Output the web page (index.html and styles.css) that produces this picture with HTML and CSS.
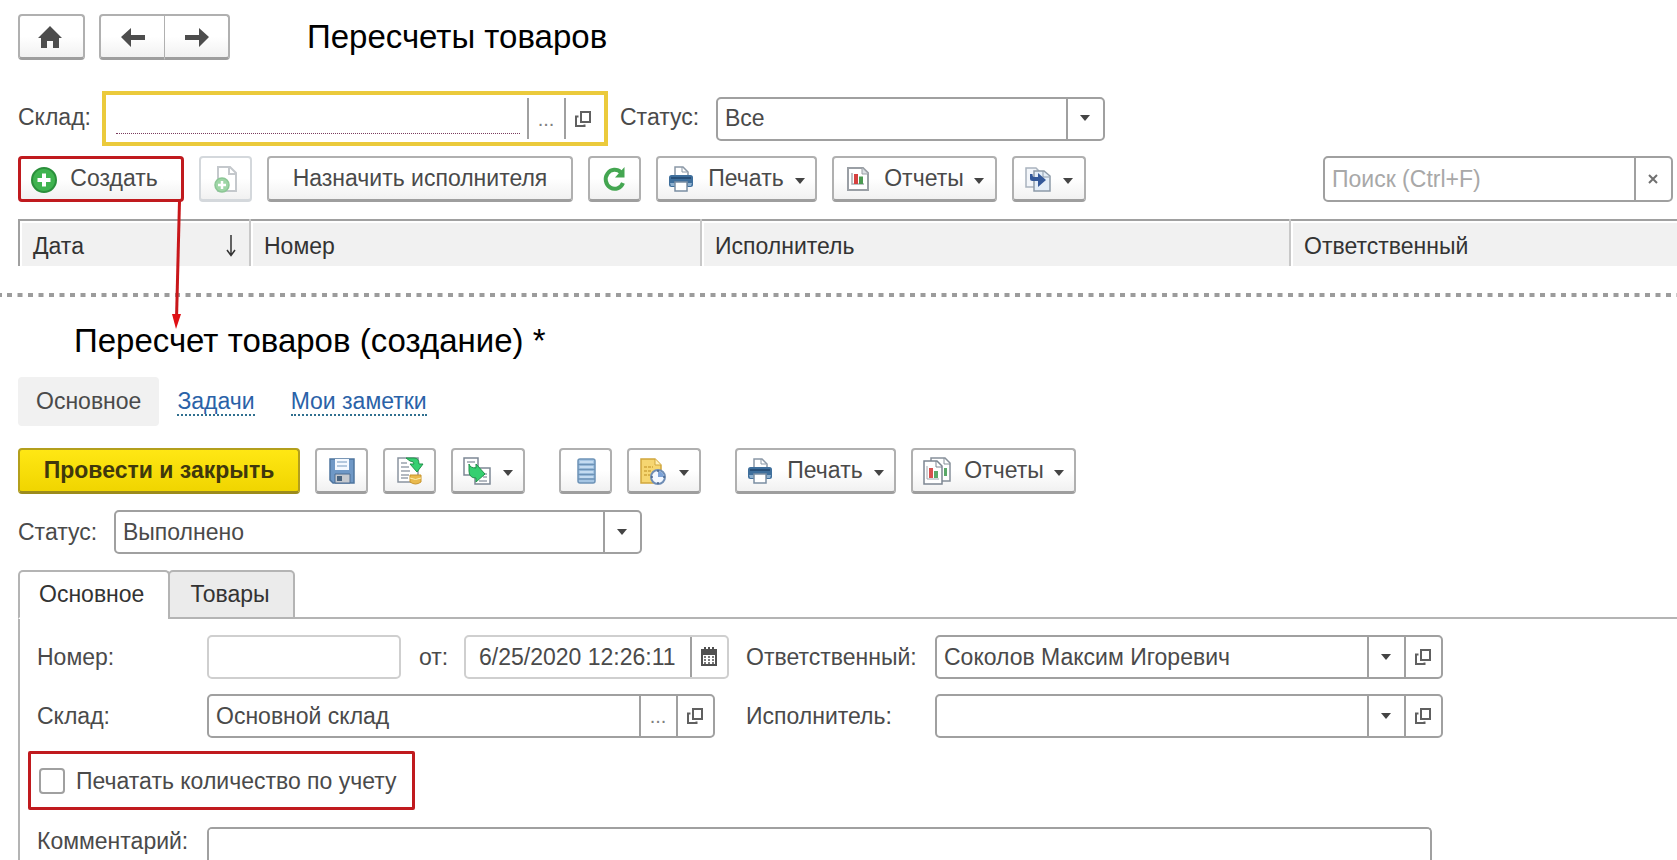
FILE: index.html
```html
<!DOCTYPE html>
<html lang="ru">
<head>
<meta charset="utf-8">
<meta name="viewport" content="width=device-width, initial-scale=1">
<title>Пересчеты товаров</title>
<link rel="stylesheet" href="styles.css">
</head>
<body>
<svg class="sprite" aria-hidden="true">
  <symbol id="i-open" viewBox="0 0 18 18"><path d="M7 2h9v10H7zM4.500 6.500H2V16h8.500v-1.500" fill="none" stroke="currentColor" stroke-width="2"/></symbol>
  <symbol id="i-caret" viewBox="0 0 10 6"><path d="M0 0h10L5 6z" fill="currentColor"/></symbol>
  <symbol id="i-printer" viewBox="0 0 26 26">
    <path d="M7 10V1h8l5 5v4" fill="#fff" stroke="#8b98a6" stroke-width="1.500"/><path d="M14 1v5h5" fill="none" stroke="#8b98a6"/>
    <rect x="1" y="9" width="24" height="12" rx="2.500" fill="#3f6f9c"/><path d="M3 12h20" stroke="#274f78" stroke-width="2"/><path d="M2 17h5v3H3zM20 17h4l-1 3h-3z" fill="#8fb1cf"/>
    <path d="M7 16h12v9H7z" fill="#fff" stroke="#7b8ea3" stroke-width="1.500"/>
  </symbol>
</svg>

<main class="page">
  <header class="head">
    <button class="btn btn-home" type="button" aria-label="Домой"><svg class="ico" viewBox="0 0 26 26"><path d="M13 2 1 14h3v10h6v-7h6v7h6V14h3z" fill="#4d4d4d"/></svg></button>
    <div class="nav">
      <button class="btn" type="button" aria-label="Назад"><svg class="ico" viewBox="0 0 26 26"><path d="M1 13 11 4v7h14v5H11v7z" fill="#4d4d4d"/></svg></button>
      <button class="btn" type="button" aria-label="Вперед"><svg class="ico" viewBox="0 0 26 26"><path d="M25 13 15 4v7H1v5h14v7z" fill="#4d4d4d"/></svg></button>
    </div>
    <h1 class="title">Пересчеты товаров</h1>
  </header>

  <div class="filters">
    <label class="label" for="f-store">Склад:</label>
    <div class="focus">
      <input class="focus-input" id="f-store" type="text">
      <button class="focus-btn" type="button" aria-label="Выбрать"><span class="dots">...</span></button>
      <button class="focus-btn" type="button" aria-label="Открыть"><svg class="open"><use href="#i-open"/></svg></button>
    </div>
    <label class="label" for="f-status">Статус:</label>
    <div class="field field-status">
      <select class="ctl" id="f-status"><option>Все</option></select>
      <button class="side" type="button" aria-label="Список"><svg class="caret"><use href="#i-caret"/></svg></button>
    </div>
  </div>

  <div class="bar">
    <div class="create-wrap">
      <button class="btn btn-create" type="button"><svg class="ico" viewBox="0 0 26 26"><circle cx="13" cy="13" r="12" fill="#3fb34f" stroke="#2a8f3b" stroke-width="2"/><path d="M13 6.500v13M6.500 13h13" stroke="#fff" stroke-width="4"/></svg>Создать</button>
      <svg class="pointer" viewBox="0 0 12 128"><path d="M7.500 0 4.500 118" stroke="#c8161a" stroke-width="3"/><path d="M0 113h9L4 128z" fill="#e01015"/></svg>
    </div>
    <button class="btn btn-icon btn-off" type="button" disabled aria-label="Скопировать"><svg class="ico ico-lg" viewBox="0 0 26 28"><path d="M5 2h12l6 6v18H5z" fill="#fff" stroke="#c4c8cc" stroke-width="2"/><path d="M16 2v7h7" fill="none" stroke="#c4c8cc" stroke-width="2"/><circle cx="9" cy="20" r="7" fill="#9ed6a6" stroke="#8cc695" stroke-width="1.500"/><path d="M9 16v8M5 20h8" stroke="#fff" stroke-width="2.500"/></svg></button>
    <button class="btn btn-assign" type="button">Назначить исполнителя</button>
    <button class="btn btn-icon" type="button" aria-label="Обновить"><svg class="ico" viewBox="0 0 26 26"><path d="M19 6.500A9 9.500 0 1 0 21 17" fill="none" stroke="#44a651" stroke-width="4"/><path d="M22.500 1v10.500H13z" fill="#44a651"/></svg></button>
    <button class="btn btn-print" type="button"><svg class="ico"><use href="#i-printer"/></svg><span>Печать</span><svg class="caret"><use href="#i-caret"/></svg></button>
    <button class="btn btn-report" type="button"><svg class="ico" viewBox="0 0 26 26"><path d="M3 2h15l5 5v17H3z" fill="#fff" stroke="#9a9fa5" stroke-width="2"/><path d="M17 2v6h6" fill="#dde1e5" stroke="#9a9fa5"/><path d="M7 7v11h12" fill="none" stroke="#a8adb3" stroke-width="1.500"/><path d="M9 8h4v10H9z" fill="#d5403f"/><path d="M14 10.500h4V18h-4z" fill="#4b9a52"/></svg><span>Отчеты</span><svg class="caret"><use href="#i-caret"/></svg></button>
    <button class="btn btn-menu" type="button" aria-label="Создать на основании"><svg class="ico" viewBox="0 0 26 26"><path d="M1 2h10l3 3v16H1z" fill="#f3f6fa" stroke="#a9b3be" stroke-width="1.500"/><path d="M9 5h10l6 5v15H9z" fill="#e4eef8" stroke="#8d9aa8" stroke-width="1.500"/><path d="M18 5v6h6" fill="none" stroke="#8d9aa8"/><path d="M5 8v4.500q0 2.500 2.500 2.500H13V21l8-7-8-7v4H9q-1.500 0-1.500-3z" fill="#34599a"/></svg><svg class="caret"><use href="#i-caret"/></svg></button>
    <div class="field field-search">
      <input class="ctl" type="search" placeholder="Поиск (Ctrl+F)" aria-label="Поиск">
      <button class="side" type="button" aria-label="Очистить"><svg class="cross" viewBox="0 0 10 10"><path d="m1 1 8 8M9 1 1 9" stroke="currentColor" stroke-width="2"/></svg></button>
    </div>
  </div>

  <table class="list">
    <colgroup><col class="c-date"><col class="c-num"><col class="c-exec"><col></colgroup>
    <thead><tr>
      <th scope="col"><div class="sort"><span>Дата</span><svg class="down" viewBox="0 0 10 22"><path d="M5 0v20M1 15l4 5.500L9 15" fill="none" stroke="currentColor" stroke-width="1.500"/></svg></div></th>
      <th scope="col">Номер</th><th scope="col">Исполнитель</th><th scope="col">Ответственный</th>
    </tr></thead>
  </table>

  <svg class="divider" viewBox="0 0 3354 8" preserveAspectRatio="none" aria-hidden="true"><path d="M14 4H3354M0 4h4" stroke="#9c9c9c" stroke-width="8" stroke-dasharray="10 11"/></svg>

  <h2 class="title title-doc">Пересчет товаров (создание) *</h2>

  <nav class="links">
    <span class="here">Основное</span>
    <a class="link" href="#tasks">Задачи</a>
    <a class="link" href="#notes">Мои заметки</a>
  </nav>

  <div class="bar bar-doc">
    <button class="btn btn-main" type="button">Провести и закрыть</button>
    <button class="btn btn-icon" type="button" aria-label="Записать"><svg class="ico" viewBox="0 0 26 26"><path d="M1 1h24v24H4l-3-3z" fill="#6f98c6" stroke="#4f759f" stroke-width="1.500"/><path d="M6 1h14v11H6z" fill="#f4f9ff"/><path d="M8 4h10M8 8h10" stroke="#9db8d4" stroke-width="1.500"/><path d="M6 16h15v9H6z" fill="#c5c9cf" stroke="#4f6f94"/><path d="M8 18h5v5H8z" fill="#48637f"/></svg></button>
    <button class="btn btn-icon" type="button" aria-label="Провести"><svg class="ico ico-lg" viewBox="0 0 26 28"><path d="M1 1h20v24H1z" fill="#fff" stroke="#8a94a0" stroke-width="1.500"/><path d="M4 6h6M4 10h8M4 14h9M4 18h8M4 21h7" stroke="#9aa3ad" stroke-width="1.500"/><path d="M13 18h11v7q-5.500 4-11 0z" fill="#e9b94c" stroke="#c8952d"/><path d="M13 21q5.500 3 11 0" fill="none" stroke="#fff0b0"/><path d="M9 1h8q5 0 5 6h4l-6 8-7-8h4q0-3-4-3z" fill="#35cf70" stroke="#20934a"/></svg></button>
    <button class="btn btn-menu" type="button" aria-label="Создать на основании"><svg class="ico ico-lg" viewBox="0 0 28 28"><path d="M1 1h14v17H1z" fill="#fff" stroke="#7d8895" stroke-width="1.500"/><path d="M12 11h15v16H12z" fill="#fff" stroke="#7d8895" stroke-width="1.500"/><path d="M4 5h8M20 17h4M20 20h4M16 24h8" stroke="#9aa3ad" stroke-width="1.500"/><path d="M6 7q1 4 7 4V7l9 10-9 8v-4q-7 0-7-7z" fill="#35cf70" stroke="#20934a"/></svg><svg class="caret"><use href="#i-caret"/></svg></button>
    <button class="btn btn-icon btn-apart" type="button" aria-label="Движения документа"><svg class="ico" viewBox="0 0 26 26"><rect x="5" y="1" width="17" height="24" rx="2" fill="#a6c6e4" stroke="#6d93b7" stroke-width="1.500"/><path d="M5 6.500h17M5 11.500h17M5 16.500h17M5 21h17" stroke="#6d93b7" stroke-width="1.500"/><path d="M7 4h13M7 9h13M7 14h13M7 19h13" stroke="#cfe3f5" stroke-width="1.500"/></svg></button>
    <button class="btn btn-menu" type="button" aria-label="Напоминание"><svg class="ico ico-lg" viewBox="0 0 26 28"><path d="M1 2h14l6 6v18H1z" fill="#f6d671" stroke="#d1a63c" stroke-width="1.500"/><path d="M15 2v6h6" fill="#fff0b5" stroke="#d1a63c"/><path d="M4 10h9M4 14h8M4 18h6" stroke="#d1a63c" stroke-width="1.500" stroke-dasharray="3 1"/><circle cx="18" cy="20" r="7" fill="#f3f8ff" stroke="#6f8db5" stroke-width="2"/><path d="M18 20v-6a6 6 0 0 1 6 6z" fill="#7ca2d6"/><path d="M18 15v-2M18 27v-2M11 20h2M23 20h2" stroke="#49658c" stroke-width="1.500"/></svg><svg class="caret"><use href="#i-caret"/></svg></button>
    <button class="btn btn-print btn-apart" type="button"><svg class="ico"><use href="#i-printer"/></svg><span>Печать</span><svg class="caret"><use href="#i-caret"/></svg></button>
    <button class="btn btn-report" type="button"><svg class="ico ico-lg" viewBox="0 0 28 28"><path d="M8 1h14l5 5v18H8z" fill="#fff" stroke="#87909a" stroke-width="1.500"/><path d="M21 1v6h6" fill="none" stroke="#87909a"/><path d="M21 11h3v8h-3z" fill="#5aa968"/><path d="M1 4h13l5 5v18H1z" fill="#fff" stroke="#7d8792" stroke-width="1.500"/><path d="M13 4v6h6" fill="none" stroke="#7d8792"/><path d="M4 9v13h12" fill="none" stroke="#a0a7ae"/><path d="M6 11h4v10H6z" fill="#d9504e"/><path d="M11 14h4v7h-4z" fill="#5aa968"/></svg><span>Отчеты</span><svg class="caret"><use href="#i-caret"/></svg></button>
  </div>

  <div class="status">
    <label class="label" for="d-status">Статус:</label>
    <div class="field field-done">
      <select class="ctl" id="d-status"><option>Выполнено</option></select>
      <button class="side" type="button" aria-label="Список"><svg class="caret"><use href="#i-caret"/></svg></button>
    </div>
  </div>

  <div class="tabs" role="tablist">
    <button class="tab tab-on" type="button" role="tab" aria-selected="true">Основное</button>
    <button class="tab" type="button" role="tab" aria-selected="false">Товары</button>
  </div>

  <form class="panel">
    <div class="row">
      <label class="label" for="d-num">Номер:</label>
      <div class="group">
        <div class="field field-soft field-num"><input class="ctl" id="d-num" type="text"></div>
        <label class="label" for="d-date">от:</label>
        <div class="field field-soft field-date">
          <input class="ctl" id="d-date" type="text" value="6/25/2020 12:26:11">
          <button class="side" type="button" aria-label="Календарь"><svg class="cal" viewBox="0 0 18 20"><path d="M1 2h16v17H1z" fill="#505050"/><path d="M3 8h12v9H3z" fill="#fff"/><path d="M5 0v4M9 0v4M13 0v4" stroke="#505050" stroke-width="2"/><path d="M4 10h10M4 13h10M4 16h10" stroke="#505050" stroke-width="1.500" stroke-dasharray="2 2"/></svg></button>
        </div>
      </div>
      <label class="label" for="d-resp">Ответственный:</label>
      <div class="field">
        <input class="ctl" id="d-resp" type="text" value="Соколов Максим Игоревич">
        <button class="side" type="button" aria-label="Список"><svg class="caret"><use href="#i-caret"/></svg></button>
        <button class="side" type="button" aria-label="Открыть"><svg class="open"><use href="#i-open"/></svg></button>
      </div>
    </div>
    <div class="row">
      <label class="label" for="d-store">Склад:</label>
      <div class="group">
        <div class="field field-store">
          <input class="ctl" id="d-store" type="text" value="Основной склад">
          <button class="side" type="button" aria-label="Выбрать"><span class="dots">...</span></button>
          <button class="side" type="button" aria-label="Открыть"><svg class="open"><use href="#i-open"/></svg></button>
        </div>
      </div>
      <label class="label" for="d-exec">Исполнитель:</label>
      <div class="field">
        <input class="ctl" id="d-exec" type="text">
        <button class="side" type="button" aria-label="Список"><svg class="caret"><use href="#i-caret"/></svg></button>
        <button class="side" type="button" aria-label="Открыть"><svg class="open"><use href="#i-open"/></svg></button>
      </div>
    </div>
    <label class="check"><input class="box" type="checkbox">Печатать количество по учету</label>
    <div class="comment">
      <label class="label" for="d-note">Комментарий:</label>
      <textarea class="note" id="d-note"></textarea>
    </div>
  </form>
</main>
</body>
</html>
```
FILE: styles.css
```css
:root {
  --line: #a0a0a0;
  --soft: #cfcfcf;
  --text: #4a4a4a;
  --red: #c01a1e;
}

* { box-sizing: border-box; }

body {
  margin: 0;
  background: #fff;
  color: var(--text);
  font: 23px/28px "Liberation Sans", Arial, sans-serif;
}

button, input, select, textarea {
  margin: 0;
  color: inherit;
  font: inherit;
}

.sprite { position: absolute; width: 0; height: 0; }

.page {
  display: flex;
  flex-direction: column;
  height: 100vh;
  padding: 14px 0 0 18px;
  overflow: hidden;
}
.page > * { flex-shrink: 0; }

/* Buttons */
.btn {
  display: flex;
  align-items: center;
  justify-content: center;
  height: 46px;
  padding: 0 0 2px;
  border: 2px solid #b0b0b0;
  border-bottom: 3px solid #9e9e9e;
  border-radius: 4px;
  background: linear-gradient(#fff 50%, #f1f1f1);
  white-space: nowrap;
}
.ico { flex: none; width: 26px; height: 26px; margin-top: 3px; }
.ico-lg { width: 28px; height: 28px; }
.caret { flex: none; width: 10px; height: 6px; color: #444; }
.btn .caret { margin: 7px 0 0 -3px; }
.open { width: 18px; height: 18px; color: #606060; }
.cross { width: 10px; height: 10px; color: #707070; }
.cal { width: 18px; height: 20px; }
.dots { color: #808080; font-size: 20px; }

.btn-home { width: 67px; padding-right: 4px; }
.btn-icon { width: 53px; }
.btn-off { border-color: #d4d8dc; }
.btn-assign { width: 306px; }
.btn-print { gap: 14px; width: 161px; }
.btn-report { gap: 13px; width: 165px; }
.btn-menu { gap: 12px; width: 74px; }
.btn-menu .caret { margin-left: 0; }
.btn-create {
  gap: 13px;
  width: 166px;
  padding: 0 13px 2px 0;
  border: 3px solid var(--red);
}
.btn-main {
  width: 282px;
  border-color: #b39f1c;
  border-bottom-color: #9c8b1c;
  background: linear-gradient(#ffe714, #f0d500);
  color: #40380c;
  font-weight: bold;
}

/* Header */
.head { display: flex; align-items: center; }
.nav { display: flex; margin: 0 77px 0 14px; }
.nav .btn { width: 65px; }
.nav .btn:first-child { width: 66px; border-right-width: 1px; border-radius: 4px 0 0 4px; }
.nav .btn:last-child { border-left-width: 0; border-radius: 0 4px 4px 0; }
.title {
  margin: 0;
  color: #000;
  font-size: 33px;
  font-weight: normal;
  line-height: 38px;
}
.title-doc { margin: 25px 0 17px 56px; }

/* Fields */
.label { white-space: nowrap; }
.field {
  display: flex;
  height: 44px;
  border: 2px solid var(--line);
  border-radius: 5px;
  background: #fff;
}
.field-soft { border-color: var(--soft); }
.ctl {
  flex: 1;
  min-width: 0;
  padding: 0 7px 1px;
  border: 0;
  outline: 0;
  background: none;
  appearance: none;
}
.ctl::placeholder { color: #a8a8a8; opacity: 1; }
.side {
  display: flex;
  align-items: center;
  justify-content: center;
  flex: none;
  width: 37px;
  padding: 0 1px 1px 0;
  border: 0;
  border-left: 2px solid var(--line);
  background: none;
}

/* Filters */
.filters { display: flex; align-items: center; margin-top: 31px; }
.filters .label { width: 84px; padding-bottom: 3px; }
.filters .label:nth-of-type(2) { width: 96px; margin-left: 12px; }
.focus {
  display: flex;
  width: 506px;
  height: 55px;
  padding: 3px 3px 3px 0;
  border: 4px solid #ebca3c;
}
.focus-input {
  flex: 1;
  min-width: 0;
  margin: 0 7px 5px 10px;
  padding: 0;
  border: 0;
  border-bottom: 1px dotted #7a3b5e;
  outline: 0;
}
.focus-btn {
  display: flex;
  align-items: center;
  justify-content: center;
  width: 37px;
  padding: 0 1px 0 0;
  border: 0;
  border-left: 2px solid var(--line);
  background: none;
}
.field-status { width: 389px; }

/* Command bars */
.bar { display: flex; gap: 15px; margin-top: 10px; padding-right: 4px; }
.create-wrap { position: relative; }
.pointer {
  position: absolute;
  z-index: 1;
  top: 45px;
  left: 154px;
  width: 12px;
  height: 128px;
}
.field-search { width: 350px; height: 46px; margin-left: auto; }
.bar-doc { margin-top: 22px; }
.btn-apart { margin-left: 19px; }

/* List header */
.list {
  width: 100%;
  margin-top: 17px;
  border-collapse: collapse;
  border-top: 2px solid var(--line);
  border-left: 2px solid var(--line);
  table-layout: fixed;
}
.list th {
  height: 46px;
  padding: 4px 13px 0;
  border-left: 2px solid #c8c8c8;
  background: #f1f1f1;
  box-shadow: inset 2px 2px 0 #fff;
  color: #333;
  font-weight: normal;
  text-align: left;
}
.list th:first-child { border-left-color: var(--line); }
.c-date { width: 231px; }
.c-num { width: 451px; }
.c-exec { width: 589px; }
.sort { display: flex; align-items: center; justify-content: space-between; }
.down { width: 10px; height: 22px; }

.divider { display: block; width: calc(100% + 18px); height: 4px; margin: 27px 0 0 -18px; }

/* Document */
.links { display: flex; align-items: center; gap: 36px; }
.here {
  margin-right: -18px;
  padding: 10px 18px 11px;
  border-radius: 4px;
  background: #f1f1f1;
}
.link {
  border-bottom: 2px dotted #2f6f8f;
  color: #2a62a8;
  line-height: 26px;
  text-decoration: none;
}

.status { display: flex; align-items: center; margin-top: 16px; }
.status .label { width: 96px; }
.field-done { width: 528px; }

.tabs { display: flex; margin-top: 16px; border-bottom: 2px solid #b4b4b4; }
.tab {
  height: 49px;
  margin: 0 0 -2px -2px;
  padding: 0 23px 2px 20px;
  border: 2px solid #b4b4b4;
  border-radius: 5px 5px 0 0;
  background: #ebebeb;
  color: #333;
}
.tab-on { margin-left: 0; padding: 0 24px 2px 19px; border-bottom-color: #fff; background: #fff; }

.panel {
  display: flex;
  flex: 1;
  flex-direction: column;
  min-height: 0;
  padding: 16px 0 0 17px;
  border-left: 2px solid #b4b4b4;
}
.row {
  display: grid;
  grid-template-columns: 170px 539px 189px minmax(0, 508px);
  align-items: center;
  margin-bottom: 15px;
}
.group { display: flex; align-items: center; }
.field-num { width: 194px; margin-right: 18px; }
.field-date { width: 265px; margin-left: auto; margin-right: 17px; }
.field-date .ctl { padding-left: 13px; }
.field-store { width: 508px; }

.check {
  display: flex;
  align-items: center;
  align-self: flex-start;
  gap: 11px;
  height: 59px;
  margin: -2px 0 17px -9px;
  padding: 0 15px 0 8px;
  border: 3px solid var(--red);
  border-radius: 2px;
}
.box {
  width: 26px;
  height: 26px;
  border: 2px solid var(--line);
  border-radius: 4px;
  appearance: none;
}

.comment { display: flex; flex: 1; min-height: 32px; }
.comment .label { width: 170px; }
.note {
  flex: 0 1 1225px;
  padding: 6px;
  border: 2px solid var(--line);
  border-bottom: 0;
  border-radius: 5px 5px 0 0;
  outline: 0;
  resize: none;
}
```
